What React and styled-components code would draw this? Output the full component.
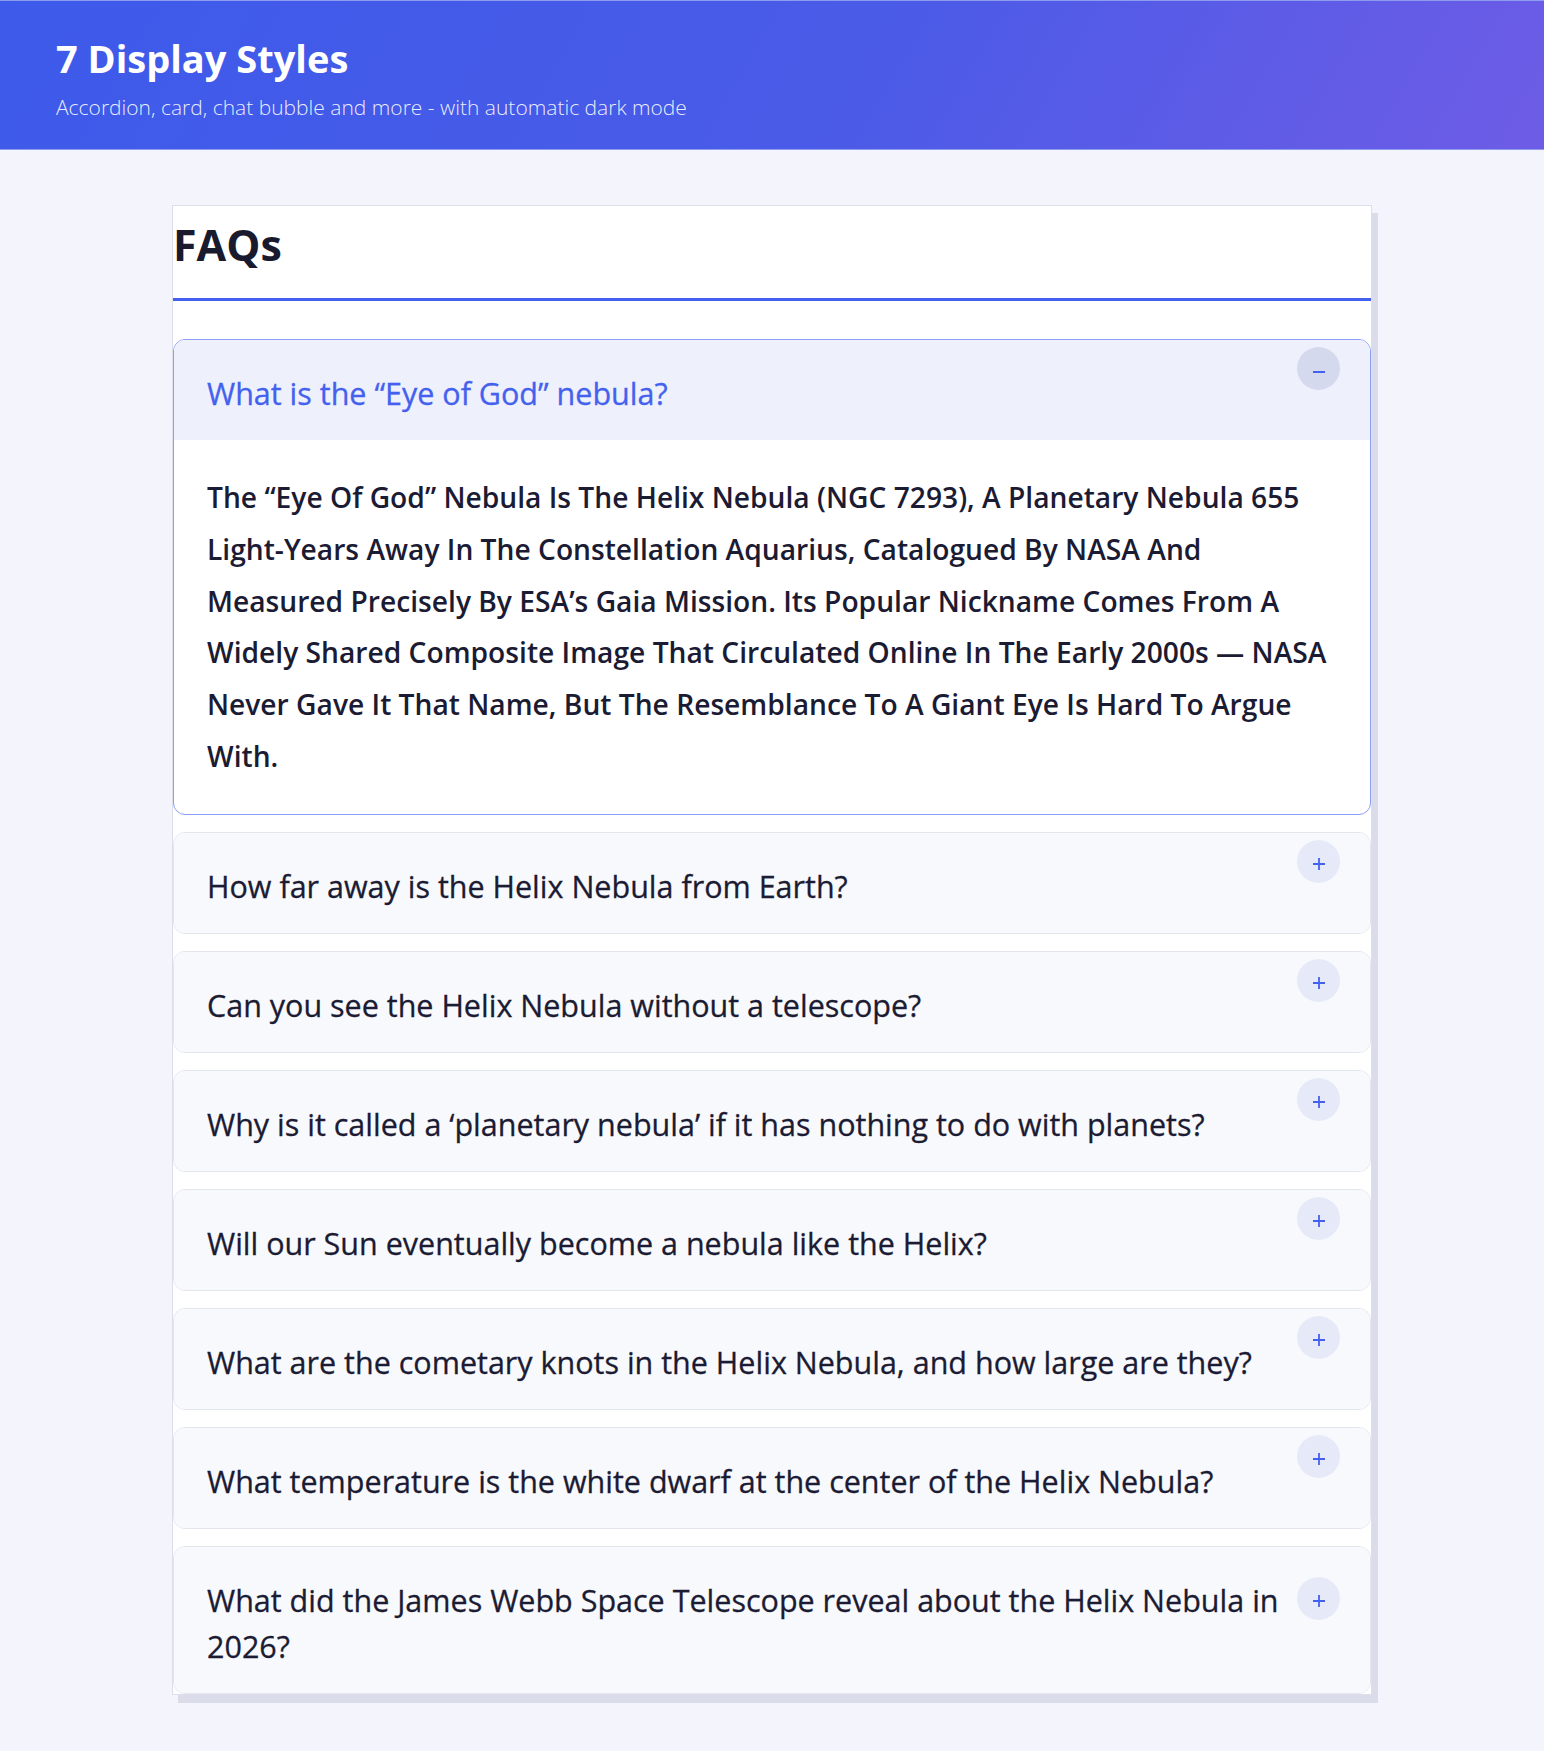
import React from 'react';
import styled, { createGlobalStyle } from 'styled-components';

const GlobalStyle = createGlobalStyle`
  body {
    margin: 0;
    background: #f3f4fc;
    font-family: 'Open Sans', 'Noto Sans', sans-serif;
    color: #1b1b33;
  }
`;

const faqs = [
  {
    q: 'What is the “Eye of God” nebula?',
    a: 'The “Eye Of God” Nebula Is The Helix Nebula (NGC 7293), A Planetary Nebula 655 Light-Years Away In The Constellation Aquarius, Catalogued By NASA And Measured Precisely By ESA’s Gaia Mission. Its Popular Nickname Comes From A Widely Shared Composite Image That Circulated Online In The Early 2000s — NASA Never Gave It That Name, But The Resemblance To A Giant Eye Is Hard To Argue With.',
    open: true,
  },
  { q: 'How far away is the Helix Nebula from Earth?' },
  { q: 'Can you see the Helix Nebula without a telescope?' },
  { q: 'Why is it called a ‘planetary nebula’ if it has nothing to do with planets?' },
  { q: 'Will our Sun eventually become a nebula like the Helix?' },
  { q: 'What are the cometary knots in the Helix Nebula, and how large are they?' },
  { q: 'What temperature is the white dwarf at the center of the Helix Nebula?' },
  { q: 'What did the James Webb Space Telescope reveal about the Helix Nebula in 2026?' },
];

function App() {
  return (
    <>
      <GlobalStyle />
      <Header>
        <Title>7 Display Styles</Title>
        <Subtitle>Accordion, card, chat bubble and more - with automatic dark mode</Subtitle>
      </Header>
      <Main>
        <Card>
          <Heading>FAQs</Heading>
          <List>
            {faqs.map((f) => (
              <Item key={f.q} $open={f.open}>
                <ItemHead $open={f.open}>
                  <Question $open={f.open}>{f.q}</Question>
                  <Toggle $open={f.open}>
                    <svg width="14" height="14" viewBox="0 0 14 14">
                      <line x1="1" y1="7" x2="13" y2="7" stroke="#4361ee" strokeWidth="1.8" />
                      {!f.open && (
                        <line x1="7" y1="1" x2="7" y2="13" stroke="#4361ee" strokeWidth="1.8" />
                      )}
                    </svg>
                  </Toggle>
                </ItemHead>
                {f.open && <Answer>{f.a}</Answer>}
              </Item>
            ))}
          </List>
        </Card>
      </Main>
    </>
  );
}

export default App;

const Header = styled.header`
  box-sizing: border-box;
  height: 150px;
  padding: 32px 56px 0;
  background: linear-gradient(120deg, #3d5aea 0%, #4a5be7 55%, #6e5ce6 100%);
  border-top: 1px solid #8e9cf0;
  border-bottom: 1px solid #8e9cf0;
  color: #fff;
`;

const Title = styled.h1`
  margin: 0;
  font-size: 38px;
  font-weight: 700;
  line-height: 50px;
`;

const Subtitle = styled.p`
  margin: 10px 0 0;
  font-size: 21px;
  font-weight: 300;
  line-height: 28px;
  color: rgba(255, 255, 255, 0.9);
`;

const Main = styled.main`
  display: flex;
  justify-content: center;
  padding: 55px 0 56px;
`;

const Card = styled.section`
  width: 1200px;
  box-sizing: border-box;
  background: #fff;
  border: 1px solid #dcdfea;
  box-shadow: 6px 8px 0 #dadcea;
`;

const Heading = styled.h2`
  margin: 0;
  padding: 10px 0 24px;
  font-size: 43px;
  font-weight: 700;
  line-height: 58px;
  color: #1a1a2e;
  border-bottom: 3px solid #4361ee;
`;

const List = styled.div`
  display: flex;
  flex-direction: column;
  gap: 17px;
  padding-top: 38px;
`;

const Item = styled.div`
  border: 1px solid ${(p) => (p.$open ? '#8d9ef5' : '#e4e6ee')};
  border-radius: 12px;
  overflow: hidden;
  background: ${(p) => (p.$open ? '#fff' : '#f8f9fc')};
`;

const ItemHead = styled.div`
  display: flex;
  align-items: center;
  gap: 12px;
  padding: 30px 30px 24px 33px;
  background: ${(p) => (p.$open ? '#eef0fc' : '#f8f9fc')};
`;

const Question = styled.h3`
  flex: 1;
  margin: 0;
  font-size: 30.5px;
  font-weight: 500;
  line-height: 46px;
  -webkit-text-stroke: 0.3px currentColor;
  color: ${(p) => (p.$open ? '#4361ee' : '#1b1b33')};
`;

const Toggle = styled.span`
  flex: none;
  display: flex;
  align-items: center;
  justify-content: center;
  width: 43px;
  height: 43px;
  margin-top: -49px;
  padding-top: 6px;
  box-sizing: border-box;
  border-radius: 50%;
  background: ${(p) => (p.$open ? '#d5d9ee' : '#e6eaf8')};
`;

const Answer = styled.p`
  margin: 0;
  padding: 32px 33px 31px 33px;
  font-size: 28.2px;
  font-weight: 600;
  line-height: 51.8px;
  color: #1b1b33;
`;
